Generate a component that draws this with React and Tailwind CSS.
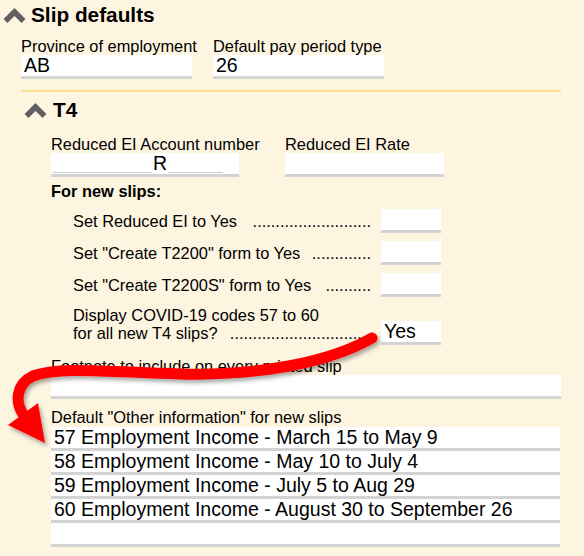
import clsx from "clsx";

const Chevron = () => (
  <svg width="23" height="15" viewBox="0 0 23 15" className="shrink-0">
    <polyline points="2.5,13 11.5,4 20.5,13" fill="none" stroke="#606060" strokeWidth="5.5" strokeLinejoin="miter" />
  </svg>
);

const Box = ({ className, children }) => (
  <div className={clsx("h-[24px] bg-white border-b-[3px] border-[#d3d3d3] text-[19.5px] leading-[21px] pl-[3px] whitespace-nowrap", className)}>
    {children}
  </div>
);

const Label = ({ children, className }) => (
  <div className={clsx("h-[18px] leading-[18px] text-[16.4px] whitespace-nowrap", className)}>{children}</div>
);

const YesRow = ({ text, dots, value }) => (
  <div className="flex h-[24px] items-center">
    <div className="flex w-[298px] text-[16.4px] leading-[18px]">
      <span className="whitespace-nowrap">{text}</span>
      <span className="ml-auto whitespace-nowrap">{".".repeat(dots)}</span>
    </div>
    <Box className="ml-[10px] w-[60px]">{value}</Box>
  </div>
);

const otherInfo = [
  "57 Employment Income - March 15 to May 9",
  "58 Employment Income - May 10 to July 4",
  "59 Employment Income - July 5 to Aug 29",
  "60 Employment Income - August 30 to September 26",
  "",
];

export default function App() {
  return (
    <div className="relative h-[556px] w-[584px] overflow-hidden bg-[#fef5e1] font-['Liberation_Sans',Arial,sans-serif] text-black">
      {/* Slip defaults */}
      <div className="flex h-[30px] items-center gap-[5px] pl-[3px]">
        <Chevron />
        <span className="text-[20.8px] font-bold leading-[30px]">Slip defaults</span>
      </div>
      <div className="pl-[21px]">
        <div className="mt-[7px] flex gap-[21px]">
          <div className="w-[171px]">
            <Label>Province of employment</Label>
            <Box className="w-[171px]">AB</Box>
          </div>
          <div className="w-[171px]">
            <Label>Default pay period type</Label>
            <Box className="w-[171px]">26</Box>
          </div>
        </div>
        <div className="mt-[11px] h-[2px] w-[540px] bg-[#fde08b]" />
      </div>

      {/* T4 */}
      <div className="mt-[3px] flex h-[30px] items-center gap-[6px] pl-[24px]">
        <Chevron />
        <span className="text-[20.8px] font-bold leading-[30px]">T4</span>
      </div>
      <div className="pl-[51px]">
        <div className="mt-[10px] flex gap-[46px]">
          <div className="w-[188px]">
            <Label>Reduced EI Account number</Label>
            <Box className="flex w-[188px] !pl-0">
              <span className="mb-[1px] ml-[2px] h-0 w-[99px] self-end border-b border-[#c8c8c8]" />
              <span className="px-[1px]">R</span>
              <span className="mb-[1px] h-0 w-[55px] self-end border-b border-[#c8c8c8]" />
            </Box>
          </div>
          <div className="w-[159px]">
            <Label>Reduced EI Rate</Label>
            <Box className="w-[159px]" />
          </div>
        </div>

        <Label className="mt-[5px] font-bold">For new slips:</Label>

        <div className="mt-[9px] flex flex-col gap-[8px] pl-[22px]">
          <YesRow text="Set Reduced EI to Yes" dots={26} value="" />
          <YesRow text={'Set "Create T2200" form to Yes'} dots={13} value="" />
          <YesRow text={'Set "Create T2200S" form to Yes'} dots={10} value="" />
          <div className="mt-[1px] flex items-end">
            <div className="w-[298px] pb-[3px] text-[16.4px] leading-[18px]">
              <div className="whitespace-nowrap">Display COVID-19 codes 57 to 60</div>
              <div className="flex">
                <span className="whitespace-nowrap">for all new T4 slips?</span>
                <span className="ml-auto whitespace-nowrap">{".".repeat(31)}</span>
              </div>
            </div>
            <Box className="ml-[10px] w-[60px]">Yes</Box>
          </div>
        </div>

        <Label className="mt-[12px]">Footnote to include on every printed slip</Label>
        <Box className="w-[510px]" />

        <Label className="mt-[9px]">Default "Other information" for new slips</Label>
        <div className="mt-[1px] w-[509px]">
          {otherInfo.map((line, i) => (
            <Box key={i} className="w-full">{line}</Box>
          ))}
        </div>
      </div>

      {/* red annotation arrow */}
      <svg className="pointer-events-none absolute left-0 top-0" width="584" height="556" viewBox="0 0 584 556">
        <defs>
          <filter id="sh" x="-10%" y="-10%" width="120%" height="130%">
            <feDropShadow dx="2" dy="3" stdDeviation="2" floodColor="#000" floodOpacity="0.35" />
          </filter>
        </defs>
        <g filter="url(#sh)">
          <path
            d="M372 338 C 330 362, 260 376, 180 374 C 110 372, 60 366, 33 376 C 16 384, 15 402, 23 414"
            fill="none"
            stroke="#ff0000"
            strokeWidth="11"
            strokeLinecap="round"
          />
          <polygon points="8,425 38,403 45,443" fill="#ff0000" />
        </g>
      </svg>
    </div>
  );
}
